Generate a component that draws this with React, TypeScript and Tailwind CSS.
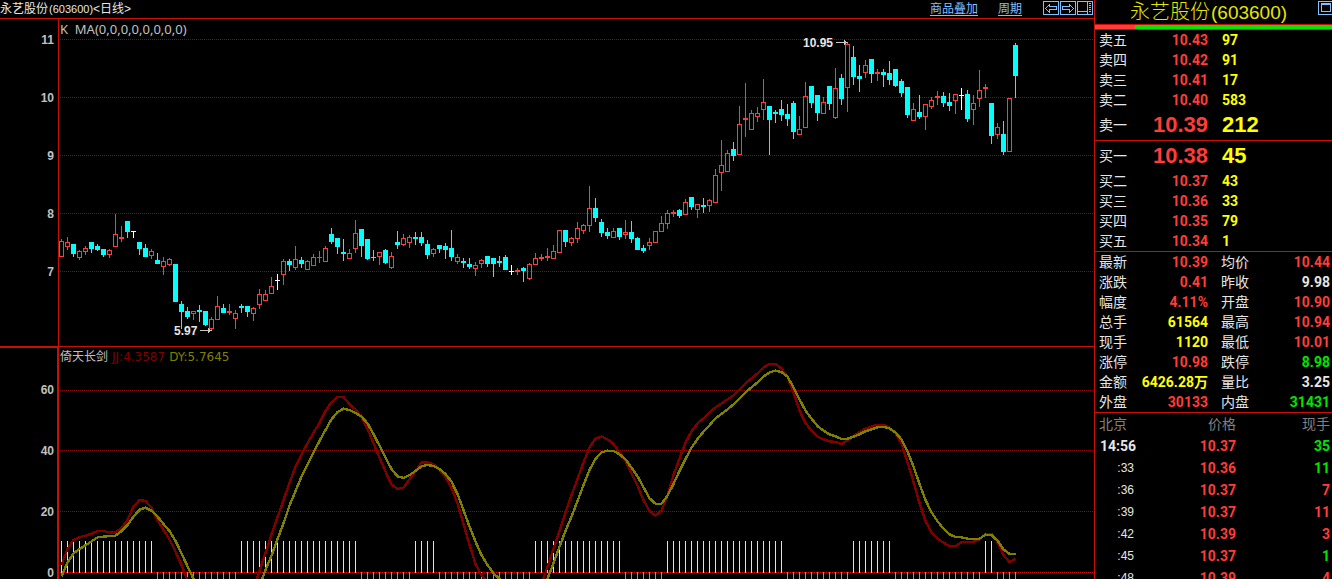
import type { ReactNode } from "react";

type Candle = ["r" | "c" | "w", number, number, number, number];

const STEP = 6;
const FIRST_X = 61;
const xOf = (i: number) => FIRST_X + i * STEP;

// kind, high, body top, body bottom, low
const candles: Candle[] = [
  ["r", 239, 241, 257, 257], ["r", 237, 242, 247, 250], ["c", 244, 244, 254, 257], ["r", 250, 251, 258, 260],
  ["r", 246, 248, 252, 255], ["c", 242, 242, 249, 253], ["c", 244, 246, 250, 251], ["c", 249, 249, 255, 257],
  ["r", 249, 250, 255, 258], ["r", 214, 234, 247, 247], ["r", 226, 237, 239, 242], ["c", 221, 221, 232, 238],
  ["w", 231, 231, 232, 238], ["c", 242, 242, 249, 255], ["c", 244, 248, 257, 257], ["r", 249, 251, 256, 259],
  ["c", 253, 260, 264, 264], ["r", 257, 261, 267, 275], ["r", 258, 259, 265, 266], ["c", 264, 264, 302, 302],
  ["c", 301, 304, 312, 329], ["c", 307, 311, 317, 319], ["r", 311, 311, 314, 320], ["c", 305, 310, 312, 322],
  ["c", 311, 311, 325, 326], ["r", 317, 319, 329, 331], ["r", 296, 306, 320, 320], ["c", 304, 308, 313, 313],
  ["r", 304, 311, 313, 315], ["r", 310, 313, 319, 329], ["c", 304, 306, 308, 313], ["c", 306, 306, 312, 317],
  ["r", 307, 308, 314, 321], ["r", 289, 294, 305, 309], ["r", 290, 294, 301, 301], ["r", 277, 286, 294, 294],
  ["w", 274, 280, 281, 290], ["r", 259, 261, 275, 285], ["c", 259, 261, 265, 271], ["r", 246, 259, 268, 270],
  ["c", 257, 260, 264, 268], ["r", 260, 261, 270, 270], ["r", 254, 257, 266, 266], ["r", 251, 257, 258, 263],
  ["r", 246, 248, 262, 262], ["c", 228, 234, 242, 244], ["c", 238, 238, 247, 254], ["c", 239, 252, 254, 261],
  ["r", 249, 253, 259, 259], ["r", 220, 233, 249, 253], ["c", 229, 229, 246, 257], ["c", 239, 239, 259, 260],
  ["c", 250, 257, 258, 261], ["r", 252, 252, 257, 265], ["c", 249, 250, 263, 264], ["r", 252, 256, 268, 269],
  ["c", 231, 242, 245, 249], ["r", 234, 238, 245, 246], ["r", 235, 237, 243, 248], ["c", 232, 237, 239, 245],
  ["c", 232, 237, 243, 246], ["c", 240, 244, 255, 259], ["r", 248, 249, 254, 257], ["c", 245, 245, 249, 253],
  ["c", 243, 246, 250, 259], ["c", 230, 248, 257, 261], ["r", 254, 257, 262, 264], ["c", 258, 261, 263, 268],
  ["c", 258, 264, 267, 269], ["r", 262, 265, 269, 276], ["r", 259, 260, 264, 268], ["c", 256, 256, 264, 267],
  ["c", 258, 258, 264, 277], ["c", 256, 261, 263, 267], ["c", 255, 257, 270, 270], ["w", 265, 271, 272, 275],
  ["r", 268, 270, 272, 275], ["c", 267, 268, 271, 282], ["r", 263, 264, 279, 280], ["r", 253, 258, 265, 265],
  ["r", 254, 257, 259, 261], ["r", 248, 256, 258, 261], ["r", 245, 251, 259, 259], ["r", 230, 230, 253, 253],
  ["c", 230, 230, 242, 247], ["r", 237, 238, 243, 246], ["r", 222, 228, 239, 243], ["r", 224, 225, 231, 234],
  ["r", 186, 208, 226, 232], ["c", 198, 208, 218, 222], ["c", 219, 222, 233, 237], ["c", 228, 232, 236, 239],
  ["r", 228, 231, 238, 238], ["c", 228, 228, 237, 240], ["r", 220, 232, 235, 239], ["c", 221, 232, 239, 243],
  ["c", 237, 238, 250, 250], ["c", 245, 248, 251, 253], ["r", 238, 242, 246, 250], ["r", 231, 231, 243, 243],
  ["r", 216, 223, 232, 232], ["r", 210, 213, 224, 229], ["r", 210, 212, 214, 217], ["c", 209, 210, 216, 218],
  ["r", 199, 202, 215, 215], ["c", 197, 197, 207, 210], ["r", 204, 204, 210, 218], ["c", 198, 205, 207, 213],
  ["r", 199, 200, 206, 212], ["r", 169, 175, 203, 203], ["r", 140, 165, 173, 191], ["r", 150, 153, 172, 172],
  ["c", 142, 149, 156, 161], ["r", 106, 124, 155, 155], ["r", 83, 118, 120, 137], ["r", 110, 113, 130, 130],
  ["r", 107, 113, 117, 122], ["r", 79, 102, 110, 120], ["c", 106, 106, 120, 155], ["c", 110, 112, 114, 123],
  ["c", 100, 109, 115, 121], ["c", 104, 114, 119, 126], ["c", 101, 103, 132, 139], ["r", 116, 129, 135, 135],
  ["r", 82, 96, 128, 128], ["c", 86, 86, 103, 108], ["c", 95, 95, 113, 121], ["r", 97, 102, 114, 114],
  ["c", 86, 86, 104, 110], ["r", 68, 88, 118, 119], ["c", 74, 78, 99, 105], ["r", 42, 44, 88, 112],
  ["c", 46, 57, 77, 85], ["c", 65, 76, 79, 92], ["r", 60, 65, 73, 78], ["c", 59, 59, 74, 83],
  ["r", 69, 72, 74, 81], ["c", 69, 72, 75, 87], ["c", 61, 73, 80, 85], ["c", 69, 69, 86, 87],
  ["c", 79, 81, 93, 97], ["c", 87, 87, 115, 118], ["r", 103, 109, 121, 121], ["c", 95, 112, 117, 119],
  ["r", 104, 104, 117, 130], ["r", 97, 100, 107, 109], ["r", 91, 96, 98, 105], ["c", 92, 96, 103, 107],
  ["c", 93, 102, 106, 111], ["r", 94, 94, 101, 114], ["w", 88, 95, 96, 110], ["c", 90, 94, 119, 122],
  ["r", 95, 103, 110, 125], ["r", 70, 90, 99, 107], ["r", 84, 87, 89, 98], ["c", 103, 103, 136, 144],
  ["r", 123, 127, 135, 139], ["c", 121, 134, 152, 155], ["r", 98, 98, 152, 152], ["c", 43, 45, 76, 98],
];

// Each run of a curve: index of its first point, then one y per trading day
const jj: [number, number[]][] = [
  [0, [565, 549, 540, 537.3, 535.7, 533.7, 531, 531, 532.5, 532.5, 528, 520, 506.7, 500, 501, 507.7, 520, 530, 539.3, 551.7, 565, 580, 596]],
  [32, [589, 571, 553.3, 534.3, 517.3, 500, 482.7, 466.7, 454.3, 443.3, 432.7, 423, 411, 402.3, 397, 397, 404, 409.7, 417, 429, 443.3, 457.7, 471.7, 484.3, 489, 487.7, 479.3, 471.3, 462.3, 462.3, 464.3, 469.7, 477, 488, 503.3, 523.7, 544.7, 564, 575, 583]],
  [80, [584, 566.7, 549.3, 531, 512.3, 495, 479, 462.3, 447.3, 438.7, 436.7, 439.3, 444, 452.3, 460.7, 473.3, 485.7, 500, 511, 515.7, 510.3, 495.7, 475, 458.3, 442.7, 431.3, 423.3, 418.3, 412.3, 407.3, 403.5, 399.3, 395.3, 389.7, 383.3, 378.3, 373.3, 367.3, 364, 364, 368.7, 376.7, 392, 410.7, 423, 430.7, 436.7, 439.3, 441.3, 442, 444, 440.3, 436, 432.3, 428.7, 426.7, 424.7, 424.7, 427.7, 433.3, 443.3, 462.3, 481.7, 503.3, 521, 532.3, 538.7, 542.7, 546, 546, 542.3, 541.7, 541.7, 539.3, 533.7, 533.7, 542, 555, 562, 558.7]],
];
const dy: [number, number[]][] = [
  [0, [576.3, 562.7, 553.3, 549, 545.3, 541.3, 537.3, 536.7, 536, 535.7, 531, 525, 516.7, 509.7, 507.7, 510.7, 516.7, 524, 531, 541, 553.3, 566.3, 579, 592]],
  [33, [586, 570, 555.7, 539.3, 523.3, 505.7, 491, 476.7, 464.3, 452.3, 441, 430, 419.3, 412, 408.7, 410, 413, 416.7, 423.3, 434, 445.7, 457.7, 469, 476.3, 478, 475, 471, 466.3, 465, 466, 469, 474, 481.7, 494, 510, 526.7, 541.7, 555, 565, 573.3, 579, 584]],
  [80, [592, 578.7, 563.3, 546.7, 531, 516.7, 501, 485, 470, 459, 452.3, 450.7, 451, 454.3, 459.3, 467.7, 476.3, 487.3, 498.3, 503.7, 503.7, 495.7, 484, 471, 459, 447.7, 439, 431.7, 425.3, 418.3, 414, 409.3, 404.3, 398.7, 392.3, 387.3, 382.3, 376.7, 372.3, 370.7, 372, 376.7, 387.3, 399.3, 410.7, 418.7, 426, 430.7, 434.3, 436.3, 439, 438.7, 436.7, 434.3, 431.3, 429.3, 427.3, 427, 428.3, 432.7, 439.3, 451.7, 466.7, 484, 500, 512.3, 521.3, 528.7, 534.3, 537, 537.3, 538.7, 539, 538.7, 534.7, 535, 540.7, 549.3, 554, 554]],
];

// Day ranges in which the signal is up; every other day is down
const upRanges = [[0, 15], [30, 49], [59, 62], [79, 93], [101, 120], [132, 138], [154, 155]];
const isUp = (i: number) => upRanges.some(([a, b]) => i >= a && i <= b);

const toPoints = (start: number, ys: number[]) =>
  ys.map((y, k) => `${xOf(start + k) + 0.5},${y}`).join(" ");

function CandleMark({ c, x }: { c: Candle; x: number }) {
  const [kind, high, top, bottom, low] = c;
  const colour = kind === "r" ? "#ff3c38" : kind === "c" ? "#00ffff" : "#ffffff";
  const hollow = kind === "r" && bottom - top > 2;
  return (
    <g fill={colour}>
      {top > high && <rect x={x} y={high} width={1} height={top - high} />}
      {low > bottom && <rect x={x} y={bottom} width={1} height={low - bottom} />}
      {hollow ? (
        <rect x={x - 1.5} y={top + 0.5} width={4} height={bottom - top - 1} fill="none" stroke={colour} />
      ) : (
        <rect x={x - 2} y={top} width={5} height={bottom - top} />
      )}
    </g>
  );
}

function GridLine({ y, bright }: { y: number; bright?: boolean }) {
  return (
    <line x1={60} x2="100%" y1={y + 0.5} y2={y + 0.5} stroke={bright ? "#d01010" : "#8c0808"} strokeDasharray="1 1" />
  );
}

function Pointer({ x, y }: { x: number; y: number }) {
  return (
    <g fill="#c8c8c8">
      <rect x={x} y={y} width={12} height={1} />
      <rect x={x + 8} y={y - 2} width={1} height={5} />
      <rect x={x + 9} y={y - 1} width={1} height={3} />
    </g>
  );
}

function PriceChart() {
  return (
    <svg className="block h-full w-full" shapeRendering="crispEdges" role="img" aria-label="日线">
      <g transform="translate(-59 -19)">
        <svg width="110%" height="600" overflow="visible">
          {[39, 97, 155, 213, 271].map((y) => (
            <GridLine key={y} y={y} />
          ))}
        </svg>
        {candles.map((c, i) => (
          <CandleMark key={i} c={c} x={xOf(i)} />
        ))}
        <g className="fill-[#e6e6e6] font-['Liberation_Sans',sans-serif] text-[12px] font-bold">
          <text x={803} y={47}>10.95</text>
          <text x={174} y={335}>5.97</text>
        </g>
        <Pointer x={836} y={42} />
        <Pointer x={200} y={330} />
      </g>
    </svg>
  );
}

function SignalChart() {
  return (
    <svg className="block h-full w-full" shapeRendering="crispEdges" role="img" aria-label="倚天长剑">
      <g transform="translate(-59 -347)">
        <svg width="110%" height="700" overflow="visible">
          {[390, 450, 511].map((y) => (
            <GridLine key={y} y={y} />
          ))}
          <GridLine y={572} bright />
        </svg>
        {candles.map((_, i) =>
          isUp(i) ? (
            <rect key={i} x={xOf(i)} y={541} width={1} height={32} fill="#ffff00" />
          ) : (
            <rect key={i} x={xOf(i)} y={572} width={1} height={32} fill="#00ff00" />
          ),
        )}
        <g fill="none" strokeWidth={2.4} strokeLinejoin="round">
          {jj.map(([s, ys]) => (
            <polyline key={s} points={toPoints(s, ys)} stroke="#800000" />
          ))}
          {dy.map(([s, ys]) => (
            <polyline key={s} points={toPoints(s, ys)} stroke="#808000" />
          ))}
        </g>
      </g>
    </svg>
  );
}

function IconButton({ label, children }: { label: string; children: ReactNode }) {
  return (
    <button type="button" aria-label={label} className="block h-[15px] w-4">
      <svg viewBox="0 0 16 15" width="16" height="15" fill="none" stroke="#80c0ff" shapeRendering="crispEdges">
        <rect x="0.5" y="0.5" width="15" height="13" />
        {children}
      </svg>
    </button>
  );
}

function TopBar() {
  return (
    <header className="flex h-[19px] shrink-0 items-start border-b border-[#c81008] pr-px text-[12px] leading-[18px] text-[#e6e6e6]">
      <h1 className="flex flex-1 whitespace-nowrap">
        永艺股份<span className="pl-px text-[11px]">(603600)</span>&lt;日线&gt;
      </h1>
      <nav className="flex gap-5 pr-[21px] text-[#80c0ff] underline underline-offset-2">
        <a href="#overlay">商品叠加</a>
        <a href="#period">周期</a>
      </nav>
      <div className="flex gap-px pt-px">
        <IconButton label="向左">
          <path d="M2.5 7.5 6.5 3.5V5.5H13.5V8.5H6.5V11.5Z" />
        </IconButton>
        <IconButton label="向右">
          <path d="M13.5 7.5 9.5 3.5V5.5H2.5V8.5H9.5V11.5Z" />
        </IconButton>
        <IconButton label="布局">
          <path d="M0 10.5H11M10.5 0V14M12 2.5H14M12 4.5H14M12 6.5H14M12 8.5H14M12 10.5H14" />
        </IconButton>
      </div>
    </header>
  );
}

function Axis({ labels, className }: { labels: string[]; className: string }) {
  return (
    <div className={`flex shrink-0 flex-col overflow-hidden text-right text-[12px] leading-4 font-bold text-[#c0c0c0] ${className}`}>
      {labels.map((l) => (
        <span key={l} className="h-4 shrink-0">{l}</span>
      ))}
    </div>
  );
}

const RED = "text-[#ff3c38]";
const GREEN = "text-[#00e600]";
const YELLOW = "text-[#ffff00]";
const WHITE = "text-[#e6e6e6]";
const NUM = "font-['Roboto','Noto_Sans_CJK_SC',sans-serif] font-bold";
const BIG = "font-['Liberation_Sans',sans-serif] text-[22px] font-bold";

const asks = [["卖五", "10.43", "97"], ["卖四", "10.42", "91"], ["卖三", "10.41", "17"], ["卖二", "10.40", "583"], ["卖一", "10.39", "212"]];
const bids = [["买一", "10.38", "45"], ["买二", "10.37", "43"], ["买三", "10.36", "33"], ["买四", "10.35", "79"], ["买五", "10.34", "1"]];

const quotes = [
  ["最新", "10.39", RED, "均价", "10.44", RED],
  ["涨跌", "0.41", RED, "昨收", "9.98", WHITE],
  ["幅度", "4.11%", RED, "开盘", "10.90", RED],
  ["总手", "61564", YELLOW, "最高", "10.94", RED],
  ["现手", "1120", YELLOW, "最低", "10.01", RED],
  ["涨停", "10.98", RED, "跌停", "8.98", GREEN],
  ["金额", "6426.28万", YELLOW, "量比", "3.25", WHITE],
  ["外盘", "30133", RED, "内盘", "31431", GREEN],
];

const ticks = [
  ["14:56", "10.37", "35", GREEN],
  [":33", "10.36", "11", GREEN],
  [":36", "10.37", "7", RED],
  [":39", "10.37", "11", RED],
  [":42", "10.39", "3", RED],
  [":45", "10.37", "1", GREEN],
  [":48", "10.39", "4", RED],
];

function Book({ rows, best }: { rows: string[][]; best: string }) {
  return (
    <table className="w-full table-fixed border-collapse border-b border-[#c81008]">
      <colgroup>
        <col className="w-[45px]" />
        <col className="w-[68px]" />
        <col />
      </colgroup>
      <tbody>
        {rows.map(([label, price, volume]) => {
          const big = label === best;
          return (
            <tr key={label} className={big ? "h-[30px]" : "h-5"}>
              <th scope="row" className="p-0 pl-1 text-left font-normal">{label}</th>
              <td className={`p-0 text-right ${RED} ${big ? BIG : NUM}`}>{price}</td>
              <td className={`p-0 pl-[14px] ${YELLOW} ${big ? BIG : NUM}`}>{volume}</td>
            </tr>
          );
        })}
      </tbody>
    </table>
  );
}

function Quotes() {
  return (
    <table className="w-full table-fixed border-collapse border-b border-[#c81008]">
      <colgroup>
        <col className="w-[39px]" />
        <col className="w-[74px]" />
        <col className="w-[53px]" />
        <col />
      </colgroup>
      <tbody>
        {quotes.map(([a, av, ac, b, bv, bc]) => (
          <tr key={a} className="h-5">
            <th scope="row" className="p-0 pl-1 text-left font-normal">{a}</th>
            <td className={`p-0 text-right whitespace-nowrap ${NUM} ${ac}`}>{av}</td>
            <th scope="row" className="p-0 pl-[13px] text-left font-normal">{b}</th>
            <td className={`p-0 pr-[2px] text-right ${NUM} ${bc}`}>{bv}</td>
          </tr>
        ))}
      </tbody>
    </table>
  );
}

function Ticks() {
  return (
    <table className="w-full table-fixed border-collapse">
      <colgroup>
        <col className="w-[41px]" />
        <col className="w-[100px]" />
        <col />
      </colgroup>
      <thead className="text-[#808080]">
        <tr className="h-[22px]">
          <th scope="col" className="p-0 pl-1 text-left font-normal">北京</th>
          <th scope="col" className="p-0 text-right font-normal">价格</th>
          <th scope="col" className="p-0 pr-[2px] text-right font-normal">现手</th>
        </tr>
      </thead>
      <tbody>
        {ticks.map(([time, price, volume, colour]) => (
          <tr key={time} className="h-[22px]">
            {time.startsWith(":") ? (
              <td className="p-0 pr-[2px] text-right text-[12px]">{time}</td>
            ) : (
              <td className={`p-0 text-right ${NUM}`}>{time}</td>
            )}
            <td className={`p-0 text-right ${NUM} ${RED}`}>{price}</td>
            <td className={`p-0 pr-[2px] text-right ${NUM} ${colour}`}>{volume}</td>
          </tr>
        ))}
      </tbody>
    </table>
  );
}

function SidePanel() {
  return (
    <aside className="flex w-[238px] shrink-0 flex-col overflow-hidden border-l border-[#c81008] text-[14px] leading-5">
      <div className="flex h-6 shrink-0 items-center text-[#e6e600]">
        <h2 className="flex flex-1 items-baseline gap-px pl-[35px] font-['Liberation_Sans','Noto_Sans_CJK_SC',sans-serif] text-[20px] leading-6 font-light whitespace-nowrap">
          永艺股份<span className="text-[19px]">(603600)</span>
        </h2>
        <button type="button" aria-label="最大化" className="h-[15px] w-[14px] self-start overflow-hidden pt-px">
          <svg width="16" height="14" viewBox="0 0 16 14" fill="none" stroke="#80c0ff" shapeRendering="crispEdges">
            <rect x="0.5" y="0.5" width="15" height="13" />
            <rect x="3.5" y="2.5" width="9" height="8" />
            <path d="M3 3.5H13" />
          </svg>
        </button>
      </div>
      <div className="flex h-[6px] shrink-0 border-y border-[#c81008]">
        <span className="w-[17%] bg-[#ff3c38]" />
        <span className="flex-1 bg-[#00e600]" />
      </div>
      <Book rows={asks} best="卖一" />
      <Book rows={bids} best="买一" />
      <Quotes />
      <Ticks />
    </aside>
  );
}

export default function App() {
  return (
    <div className="flex h-screen overflow-hidden bg-black font-['Liberation_Sans','Noto_Sans_CJK_SC',sans-serif] text-[#e6e6e6]">
      <main className="flex min-w-0 flex-1 flex-col">
        <TopBar />
        <section className="flex h-[327px] shrink-0">
          <Axis labels={["11", "10", "9", "8", "7"]} className="w-[58px] gap-[42px] pt-[13px] pr-1" />
          <div className="relative min-w-0 flex-1 overflow-hidden border-l border-[#c81008]">
            <p className="absolute top-0 left-px font-['Noto_Sans',sans-serif] text-[13px] leading-5 whitespace-pre text-[#c0c0c0]">
              {"K  MA(0,0,0,0,0,0,0,0)"}
            </p>
            <PriceChart />
          </div>
        </section>
        <section className="flex min-h-0 flex-1">
          <Axis labels={["60", "40", "20", "0"]} className="w-[59px] gap-[45px] border-t-2 border-r-2 border-[#c81008] pt-[34px] pr-[3px]" />
          <div className="relative min-w-0 flex-1 overflow-hidden border-t border-[#c81008]">
            <p className="absolute top-0 left-px flex gap-1 text-[12px] leading-5 whitespace-nowrap">
              <span className="text-[#c0c0c0]">倚天长剑</span>
              <span className="font-['DejaVu_Sans',sans-serif] text-[#800000]">JJ:4.3587</span>
              <span className="font-['DejaVu_Sans',sans-serif] text-[#808000]">DY:5.7645</span>
            </p>
            <SignalChart />
          </div>
        </section>
      </main>
      <SidePanel />
    </div>
  );
}
